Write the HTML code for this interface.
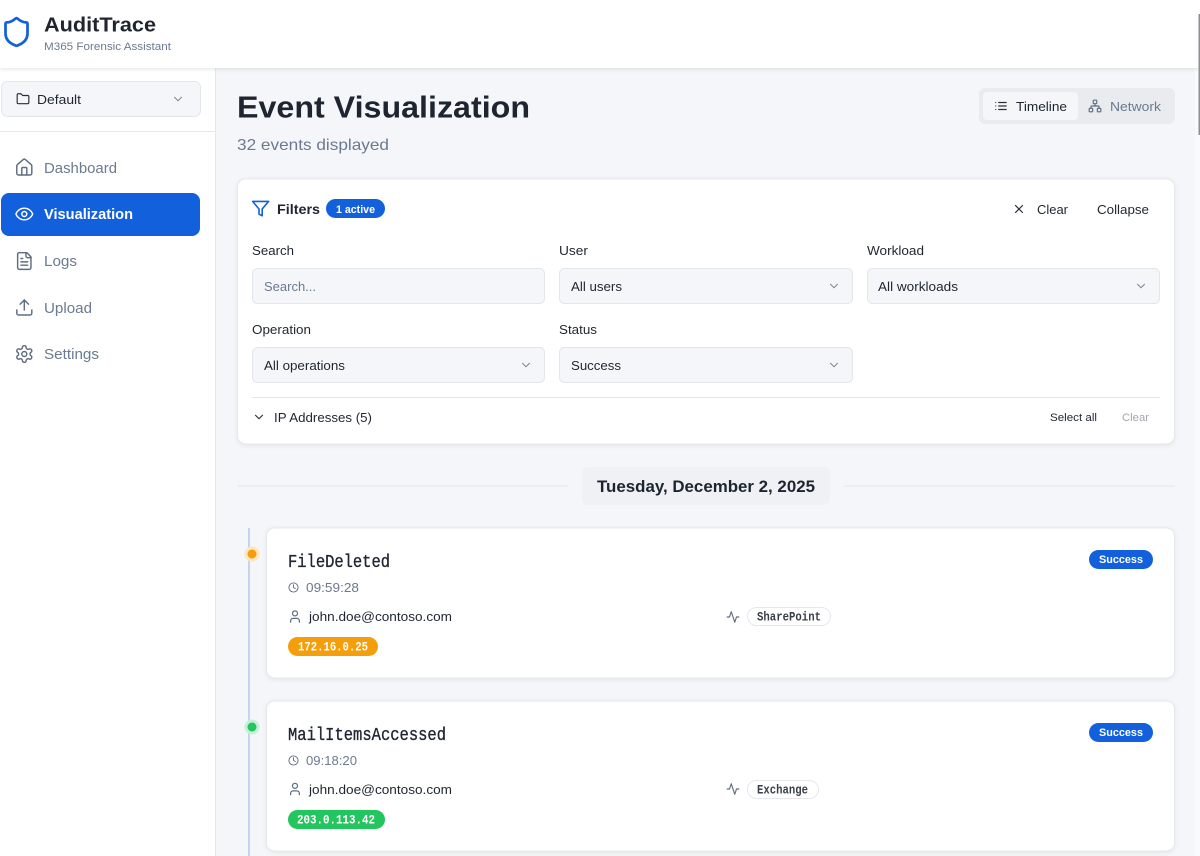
<!DOCTYPE html>
<html lang="en"><head><meta charset="utf-8"><title>AuditTrace</title>
<style>
html,body{margin:0;padding:0;width:1200px;height:856px;overflow:hidden;background:#f4f6f9}
svg{display:block;position:absolute;left:0;top:0}
text{font-family:"Liberation Sans",Arial,sans-serif;fill:#1f2530;white-space:pre}
.m{font-family:"Liberation Mono",monospace}
.b{font-weight:700}
.g{fill:#6b7a90}
.t{stroke:#1f2530;stroke-width:.35}
.i{fill:none;stroke:#5f6d82;stroke-width:2;stroke-linecap:round;stroke-linejoin:round}
.n{stroke-width:1.75}
.c{stroke:#7a8596;stroke-width:1.7}
.d{stroke:#2a303a}
.card{fill:#fff;stroke:#e6e8ec;stroke-width:1;filter:drop-shadow(0 1px 2px rgba(20,30,50,.08))}
.inp{fill:#f4f6f9;stroke:#e3e6ea;stroke-width:1}
</style></head><body>
<svg width="1200" height="856" viewBox="0 0 1200 856" xmlns="http://www.w3.org/2000/svg">
<defs>
<symbol id="shield" viewBox="0 0 24 24"><path d="M20 13c0 5-3.5 7.5-7.66 8.95a1 1 0 0 1-.67-.01C7.5 20.5 4 18 4 13V6a1 1 0 0 1 1-1c2 0 4.5-1.2 6.24-2.72a1.17 1.17 0 0 1 1.52 0C14.51 3.81 17 5 19 5a1 1 0 0 1 1 1z"/></symbol>
<symbol id="folder" viewBox="0 0 24 24"><path d="M20 20a2 2 0 0 0 2-2V8a2 2 0 0 0-2-2h-7.9a2 2 0 0 1-1.69-.9L9.6 3.9A2 2 0 0 0 7.93 3H4a2 2 0 0 0-2 2v13a2 2 0 0 0 2 2Z"/></symbol>
<symbol id="chev" viewBox="0 0 24 24"><path d="m6 9 6 6 6-6"/></symbol>
<symbol id="home" viewBox="0 0 24 24"><path d="M15 21v-8a1 1 0 0 0-1-1h-4a1 1 0 0 0-1 1v8"/><path d="M3 10a2 2 0 0 1 .709-1.528l7-5.999a2 2 0 0 1 2.582 0l7 5.999A2 2 0 0 1 21 10v9a2 2 0 0 1-2 2H5a2 2 0 0 1-2-2z"/></symbol>
<symbol id="eye" viewBox="0 0 24 24"><path d="M2.062 12.348a1 1 0 0 1 0-.696 10.75 10.75 0 0 1 19.876 0 1 1 0 0 1 0 .696 10.75 10.75 0 0 1-19.876 0"/><circle cx="12" cy="12" r="3"/></symbol>
<symbol id="file" viewBox="0 0 24 24"><path d="M15 2H6a2 2 0 0 0-2 2v16a2 2 0 0 0 2 2h12a2 2 0 0 0 2-2V7Z"/><path d="M14 2v4a2 2 0 0 0 2 2h4"/><path d="M10 9H8"/><path d="M16 13H8"/><path d="M16 17H8"/></symbol>
<symbol id="upload" viewBox="0 0 24 24"><path d="M21 15v4a2 2 0 0 1-2 2H5a2 2 0 0 1-2-2v-4"/><path d="m17 8-5-5-5 5"/><path d="M12 3v12"/></symbol>
<symbol id="gear" viewBox="0 0 24 24"><path d="M12.22 2h-.44a2 2 0 0 0-2 2v.18a2 2 0 0 1-1 1.73l-.43.25a2 2 0 0 1-2 0l-.15-.08a2 2 0 0 0-2.73.73l-.22.38a2 2 0 0 0 .73 2.73l.15.1a2 2 0 0 1 1 1.72v.51a2 2 0 0 1-1 1.74l-.15.09a2 2 0 0 0-.73 2.73l.22.38a2 2 0 0 0 2.73.73l.15-.08a2 2 0 0 1 2 0l.43.25a2 2 0 0 1 1 1.73V20a2 2 0 0 0 2 2h.44a2 2 0 0 0 2-2v-.18a2 2 0 0 1 1-1.73l.43-.25a2 2 0 0 1 2 0l.15.08a2 2 0 0 0 2.73-.73l.22-.39a2 2 0 0 0-.73-2.73l-.15-.08a2 2 0 0 1-1-1.74v-.5a2 2 0 0 1 1-1.74l.15-.09a2 2 0 0 0 .73-2.73l-.22-.38a2 2 0 0 0-2.73-.73l-.15.08a2 2 0 0 1-2 0l-.43-.25a2 2 0 0 1-1-1.73V4a2 2 0 0 0-2-2z"/><circle cx="12" cy="12" r="3"/></symbol>
<symbol id="list" viewBox="0 0 24 24"><path d="M3 12h.01"/><path d="M3 18h.01"/><path d="M3 6h.01"/><path d="M8 12h13"/><path d="M8 18h13"/><path d="M8 6h13"/></symbol>
<symbol id="net" viewBox="0 0 24 24"><rect x="16" y="16" width="6" height="6" rx="1"/><rect x="2" y="16" width="6" height="6" rx="1"/><rect x="9" y="2" width="6" height="6" rx="1"/><path d="M5 16v-3a1 1 0 0 1 1-1h12a1 1 0 0 1 1 1v3"/><path d="M12 12V8"/></symbol>
<symbol id="x" viewBox="0 0 24 24"><path d="M18 6 6 18"/><path d="m6 6 12 12"/></symbol>
<symbol id="clock" viewBox="0 0 24 24"><circle cx="12" cy="12" r="10"/><path d="M12 6v6l4 2"/></symbol>
<symbol id="user" viewBox="0 0 24 24"><path d="M19 21v-2a4 4 0 0 0-4-4H9a4 4 0 0 0-4 4v2"/><circle cx="12" cy="7" r="4"/></symbol>
<symbol id="act" viewBox="0 0 24 24"><path d="M22 12h-4l-3 9L9 3l-3 9H2"/></symbol>
</defs>

<!-- backgrounds -->
<rect width="1200" height="856" fill="#f4f6f9"/>
<rect x="1195" y="68" width="5" height="788" fill="#f9fafb"/>
<rect x="0" y="68" width="215" height="788" fill="#fff"/>
<rect x="215" y="68" width="1" height="788" fill="#e5e7eb"/>
<rect x="0" y="0" width="1200" height="68" fill="#fff" style="filter:drop-shadow(0 1px 2px rgba(20,30,50,.12))"/>
<rect x="1198.5" y="14" width="1.5" height="121" fill="#8a8f98"/>

<!-- header -->
<use href="#shield" x="0" y="15.5" width="33" height="33" class="i" style="stroke:#1260dc"/>
<text x="44" y="31.5" font-size="20" class="b" textLength="112" lengthAdjust="spacingAndGlyphs">AuditTrace</text>
<text x="44" y="50" font-size="11" class="g" textLength="127" lengthAdjust="spacingAndGlyphs">M365 Forensic Assistant</text>

<!-- sidebar -->
<rect x="1.5" y="81.5" width="199" height="35" rx="6" class="inp"/>
<use href="#folder" x="16" y="92" width="14" height="14" class="i d"/>
<text x="37" y="104" font-size="13" textLength="44" lengthAdjust="spacingAndGlyphs">Default</text>
<use href="#chev" x="171" y="92" width="14" height="14" class="i c"/>
<rect x="0" y="131" width="215" height="1" fill="#e5e7eb"/>

<use href="#home" x="14.3" y="157.5" width="20" height="20" class="i n"/>
<text x="44" y="173" font-size="15" class="g" textLength="73" lengthAdjust="spacingAndGlyphs">Dashboard</text>
<rect x="1" y="193" width="199" height="43" rx="8" fill="#1260dc"/>
<use href="#eye" x="14.3" y="204" width="20" height="20" class="i n" style="stroke:#fff"/>
<text x="44" y="219" font-size="15" class="b" style="fill:#fff" textLength="89" lengthAdjust="spacingAndGlyphs">Visualization</text>
<use href="#file" x="14.3" y="251" width="20" height="20" class="i n"/>
<text x="44" y="266" font-size="15" class="g" textLength="33" lengthAdjust="spacingAndGlyphs">Logs</text>
<use href="#upload" x="14.3" y="297.5" width="20" height="20" class="i n"/>
<text x="44" y="313" font-size="15" class="g" textLength="48" lengthAdjust="spacingAndGlyphs">Upload</text>
<use href="#gear" x="14.3" y="344" width="20" height="20" class="i n"/>
<text x="44" y="359" font-size="15" class="g" textLength="55" lengthAdjust="spacingAndGlyphs">Settings</text>

<!-- title -->
<text x="237" y="117.5" font-size="31" class="b" textLength="293" lengthAdjust="spacingAndGlyphs">Event Visualization</text>
<text x="237" y="150" font-size="16" class="g" textLength="152" lengthAdjust="spacingAndGlyphs">32 events displayed</text>

<rect x="979" y="88" width="196" height="36" rx="6" fill="#e9ebef"/>
<rect x="983" y="92" width="95" height="28" rx="4" fill="#f4f6f9"/>
<use href="#list" x="994" y="99" width="14" height="14" class="i d"/>
<text x="1016" y="111" font-size="13" textLength="51" lengthAdjust="spacingAndGlyphs">Timeline</text>
<use href="#net" x="1088" y="99" width="14" height="14" class="i"/>
<text x="1110" y="111" font-size="13" class="g" textLength="51" lengthAdjust="spacingAndGlyphs">Network</text>

<!-- filters -->
<rect x="237.5" y="179" width="937" height="265" rx="8" class="card"/>
<polygon points="22 3 2 3 10 12.46 10 19 14 21 14 12.46 22 3" transform="translate(251,199) scale(.8)" fill="none" stroke="#1260dc" stroke-width="2" stroke-linejoin="round"/>
<text x="277" y="214" font-size="14" class="b" textLength="43" lengthAdjust="spacingAndGlyphs">Filters</text>
<rect x="326" y="199" width="59" height="19" rx="9.5" fill="#1260dc"/>
<text x="336" y="213" font-size="11" class="b" style="fill:#fff" textLength="39" lengthAdjust="spacingAndGlyphs">1 active</text>
<use href="#x" x="1012" y="202" width="14" height="14" class="i d"/>
<text x="1037" y="214" font-size="13" textLength="31" lengthAdjust="spacingAndGlyphs">Clear</text>
<text x="1097" y="214" font-size="13" textLength="52" lengthAdjust="spacingAndGlyphs">Collapse</text>

<text x="252" y="255" font-size="13" textLength="42" lengthAdjust="spacingAndGlyphs">Search</text>
<text x="559" y="255" font-size="13" textLength="29" lengthAdjust="spacingAndGlyphs">User</text>
<text x="867" y="255" font-size="13" textLength="57" lengthAdjust="spacingAndGlyphs">Workload</text>

<rect x="252.5" y="268.5" width="292" height="35" rx="5" class="inp"/>
<text x="264" y="291" font-size="13" class="g" textLength="52" lengthAdjust="spacingAndGlyphs">Search...</text>
<rect x="559.5" y="268.5" width="293" height="35" rx="5" class="inp"/>
<text x="571" y="291" font-size="13" textLength="51" lengthAdjust="spacingAndGlyphs">All users</text>
<use href="#chev" x="827" y="279" width="14" height="14" class="i c"/>
<rect x="867.5" y="268.5" width="292" height="35" rx="5" class="inp"/>
<text x="878" y="291" font-size="13" textLength="80" lengthAdjust="spacingAndGlyphs">All workloads</text>
<use href="#chev" x="1134" y="279" width="14" height="14" class="i c"/>

<text x="252" y="334" font-size="13" textLength="59" lengthAdjust="spacingAndGlyphs">Operation</text>
<text x="559" y="334" font-size="13" textLength="38" lengthAdjust="spacingAndGlyphs">Status</text>
<rect x="252.5" y="347.5" width="292" height="35" rx="5" class="inp"/>
<text x="264" y="370" font-size="13" textLength="81" lengthAdjust="spacingAndGlyphs">All operations</text>
<use href="#chev" x="519" y="358" width="14" height="14" class="i c"/>
<rect x="559.5" y="347.5" width="293" height="35" rx="5" class="inp"/>
<text x="571" y="370" font-size="13" textLength="50" lengthAdjust="spacingAndGlyphs">Success</text>
<use href="#chev" x="827" y="358" width="14" height="14" class="i c"/>

<rect x="252" y="397" width="908" height="1" fill="#e5e7eb"/>
<use href="#chev" x="252" y="410" width="14" height="14" class="i d"/>
<text x="274" y="422" font-size="13" textLength="98" lengthAdjust="spacingAndGlyphs">IP Addresses (5)</text>
<text x="1050" y="421" font-size="11" textLength="47" lengthAdjust="spacingAndGlyphs">Select all</text>
<text x="1122" y="421" font-size="11" style="fill:#a3a6ab" textLength="27" lengthAdjust="spacingAndGlyphs">Clear</text>

<!-- date -->
<rect x="237" y="485.5" width="331" height="1" fill="#e5e7eb"/>
<rect x="844" y="485.5" width="331" height="1" fill="#e5e7eb"/>
<rect x="582" y="467" width="248" height="38" rx="6" fill="#eff1f4"/>
<text x="597" y="492" font-size="17" class="b" textLength="218" lengthAdjust="spacingAndGlyphs">Tuesday, December 2, 2025</text>

<!-- timeline -->
<rect x="248" y="528" width="2" height="328" fill="#c5d3f3"/>
<circle cx="252" cy="554" r="7.5" fill="#fbe6bf"/>
<circle cx="252" cy="554" r="4.5" fill="#f59e0b"/>
<circle cx="252" cy="727" r="7.5" fill="#c6efd5"/>
<circle cx="252" cy="727" r="4.5" fill="#22c55e"/>

<!-- card 1 -->
<rect x="266.5" y="528" width="908" height="150" rx="8" class="card"/>
<text x="288" y="567" font-size="18.5" class="m t" textLength="102" lengthAdjust="spacingAndGlyphs">FileDeleted</text>
<use href="#clock" x="288" y="582" width="11" height="11" class="i"/>
<text x="306" y="592" font-size="13" class="g" textLength="53" lengthAdjust="spacingAndGlyphs">09:59:28</text>
<use href="#user" x="287.5" y="609" width="15" height="15" class="i"/>
<text x="309" y="621" font-size="13" textLength="143" lengthAdjust="spacingAndGlyphs">john.doe@contoso.com</text>
<rect x="288" y="637" width="90" height="19" rx="9.5" fill="#f59e0b"/>
<text x="298" y="650.5" font-size="12.5" class="m b" style="fill:#fff" textLength="70" lengthAdjust="spacingAndGlyphs">172.16.0.25</text>
<rect x="1089" y="550" width="64" height="19" rx="9.5" fill="#1260dc"/>
<text x="1099" y="563" font-size="11" class="b" style="fill:#fff" textLength="44" lengthAdjust="spacingAndGlyphs">Success</text>
<use href="#act" x="726" y="610" width="14" height="14" class="i"/>
<rect x="747.5" y="607.5" width="83" height="18" rx="9" fill="#fff" stroke="#e5e7eb"/>
<text x="757" y="620.5" font-size="12.5" class="m b" style="fill:#3a4049" textLength="64" lengthAdjust="spacingAndGlyphs">SharePoint</text>

<!-- card 2 -->
<rect x="266.5" y="701" width="908" height="150" rx="8" class="card"/>
<text x="288" y="740" font-size="18.5" class="m t" textLength="158" lengthAdjust="spacingAndGlyphs">MailItemsAccessed</text>
<use href="#clock" x="288" y="755" width="11" height="11" class="i"/>
<text x="306" y="765" font-size="13" class="g" textLength="51" lengthAdjust="spacingAndGlyphs">09:18:20</text>
<use href="#user" x="287.5" y="781.5" width="15" height="15" class="i"/>
<text x="309" y="794" font-size="13" textLength="143" lengthAdjust="spacingAndGlyphs">john.doe@contoso.com</text>
<rect x="288" y="810" width="97" height="19" rx="9.5" fill="#22c55e"/>
<text x="297" y="823.5" font-size="12.5" class="m b" style="fill:#fff" textLength="78" lengthAdjust="spacingAndGlyphs">203.0.113.42</text>
<rect x="1089" y="723" width="64" height="19" rx="9.5" fill="#1260dc"/>
<text x="1099" y="736" font-size="11" class="b" style="fill:#fff" textLength="44" lengthAdjust="spacingAndGlyphs">Success</text>
<use href="#act" x="726" y="782" width="14" height="14" class="i"/>
<rect x="747.5" y="780.5" width="71" height="18" rx="9" fill="#fff" stroke="#e5e7eb"/>
<text x="757" y="793.5" font-size="12.5" class="m b" style="fill:#3a4049" textLength="51" lengthAdjust="spacingAndGlyphs">Exchange</text>
</svg>
</body></html>
